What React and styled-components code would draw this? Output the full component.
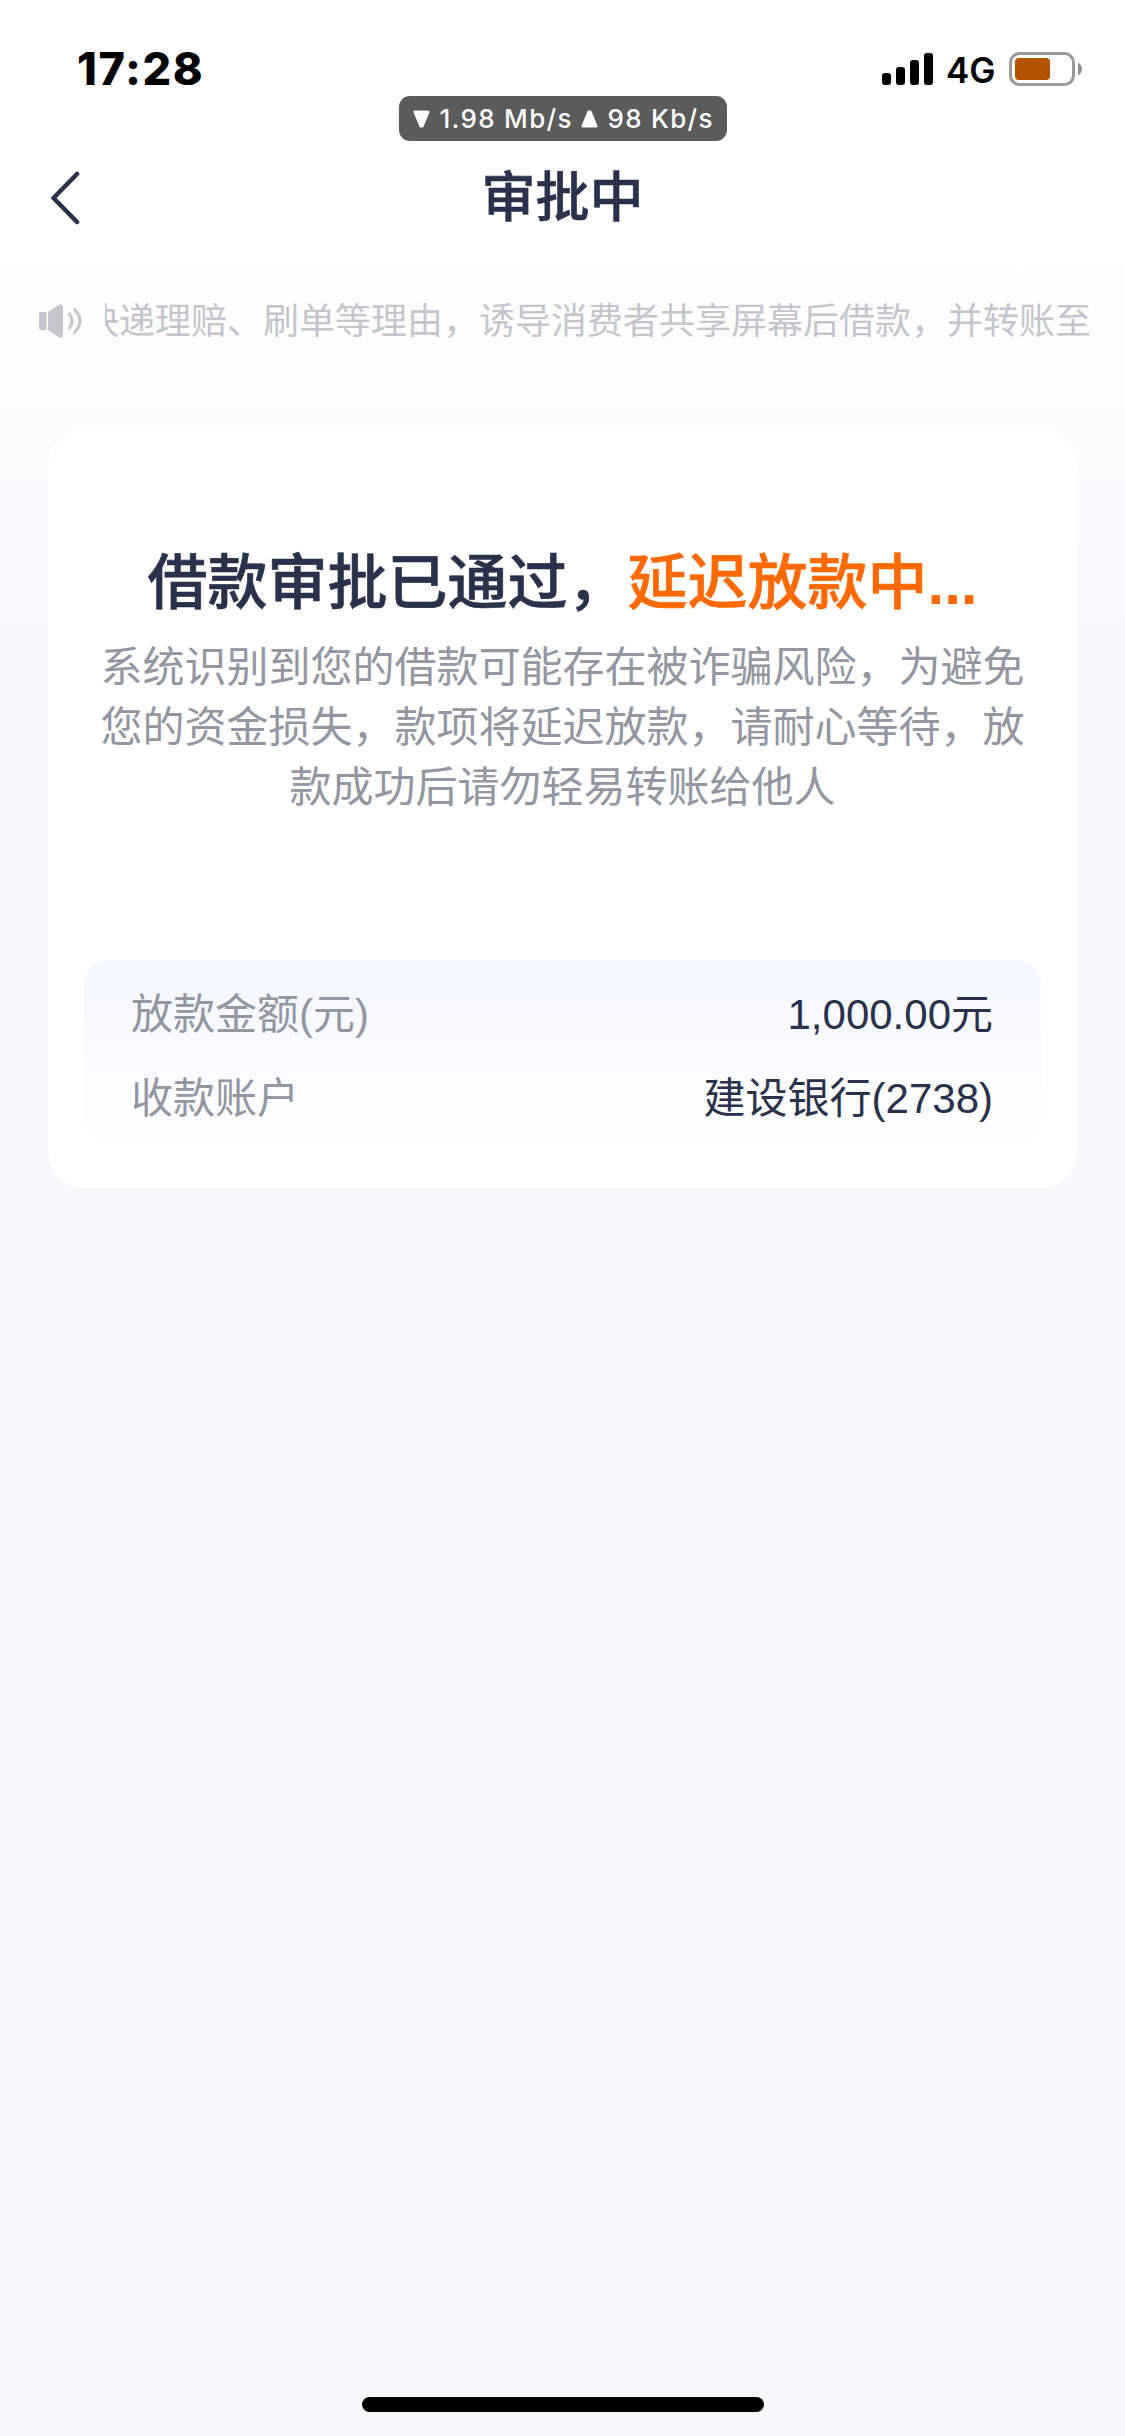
import React from 'react';
import styled, { createGlobalStyle } from 'styled-components';

const GlobalStyle = createGlobalStyle`
  * {
    box-sizing: border-box;
  }
  body {
    margin: 0;
    background: #f6f7f9;
  }
  h1, h2, p {
    margin: 0;
  }
`;

const Screen = styled.div`
  display: flex;
  flex-direction: column;
  width: 1125px;
  height: 2436px;
  overflow: hidden;
  color: #2a324b;
  background: linear-gradient(#fff 260px, #f6f7f9 640px);
  font-family: 'Liberation Sans', 'Noto Sans CJK SC', sans-serif;
`;

const StatusBar = styled.div`
  display: flex;
  align-items: center;
  justify-content: space-between;
  height: 96px;
  padding: 42px 42px 0 77px;
  color: #000;
  font-family: Inter, sans-serif;
`;

const Time = styled.span`
  font-size: 45px;
  font-weight: 800;
  letter-spacing: 1.6px;
  line-height: 54px;
`;

const StatusRight = styled.div`
  display: flex;
  align-items: center;
  height: 54px;
`;

const Network = styled.span`
  width: 49px;
  margin: 2px 14px 0 13px;
  font-size: 35px;
  font-weight: 600;
  line-height: 54px;
  white-space: nowrap;
`;

const SpeedPill = styled.div`
  display: flex;
  align-items: center;
  align-self: center;
  width: 328px;
  height: 45px;
  padding-left: 14px;
  border-radius: 11px;
  background: #5b5b5b;
  color: #fff;
  font-family: Inter, sans-serif;
  font-size: 26px;
  font-weight: 500;
  letter-spacing: 1.3px;
  white-space: nowrap;
`;

const SpeedItem = styled.span`
  display: flex;
  align-items: center;
  gap: 10px;
  width: ${({ $width }) => $width}px;
`;

const NavBar = styled.header`
  display: grid;
  grid-template-columns: 1fr auto 1fr;
  align-items: center;
  height: 114px;
  padding: 0 50px;
`;

const Title = styled.h1`
  font-size: 54px;
  font-weight: 500;
  line-height: 80px;
  -webkit-text-stroke: 0.6px currentColor;
`;

const Notice = styled.div`
  display: flex;
  align-items: center;
  height: 60px;
  margin-top: 36px;
  padding: 0 34px 0 38px;
  color: #c4c6ce;
`;

const NoticeWindow = styled.div`
  flex: 1;
  margin-left: 23px;
  overflow: hidden;
`;

const NoticeText = styled.p`
  margin-left: -22px;
  padding-top: 2px;
  font-size: 36px;
  line-height: 54px;
  white-space: nowrap;
`;

const Card = styled.section`
  height: 759px;
  margin: 78px 48px 0;
  padding: 110px 36px 0;
  border-radius: 36px;
  background: #fff;
`;

const Heading = styled.h2`
  font-size: 60px;
  font-weight: 500;
  line-height: 90px;
  text-align: center;
  white-space: nowrap;
  -webkit-text-stroke: 0.6px currentColor;
`;

const Highlight = styled.span`
  color: #ff6a00;
`;

const Dots = styled.span`
  font-weight: 700;
  -webkit-text-stroke: 0;
`;

const Description = styled.p`
  margin-top: 9px;
  color: #9297a2;
  font-size: 42px;
  line-height: 60px;
  text-align: center;
  white-space: nowrap;
`;

const InfoBox = styled.div`
  height: 186px;
  margin-top: 142px;
  padding: 13px 48px 0 47px;
  border-radius: 24px;
  background: linear-gradient(#f2f7ff, #fff);
`;

const InfoRow = styled.div`
  display: flex;
  justify-content: space-between;
  height: 84px;
  font-size: 42px;
  line-height: 84px;
`;

const InfoLabel = styled.span`
  color: #9297a2;
`;

const HomeIndicator = styled.div`
  align-self: center;
  width: 402px;
  height: 15px;
  margin: auto 0 24px;
  border-radius: 8px;
  background: #000;
`;

const SignalIcon = () => (
  <svg width="51" height="34" viewBox="0 0 51 34">
    <rect x="0" y="21" width="9" height="12" rx="3" />
    <rect x="14" y="15" width="9" height="18" rx="3" />
    <rect x="28" y="8" width="9" height="25" rx="3" />
    <rect x="42" y="1" width="9" height="32" rx="3" />
  </svg>
);

const BatteryIcon = () => (
  <svg width="74" height="34" viewBox="0 0 74 34">
    <rect x="1.5" y="1.5" width="63" height="31" rx="9" fill="none" stroke="#9b9b9b" strokeWidth="3" />
    <rect x="6" y="6" width="35" height="22" rx="4" fill="#b35300" />
    <path d="M69 10.7c2.4 1 4 3.400 4 6.300s-1.600 5.300-4 6.300z" fill="#8e8e8e" />
  </svg>
);

const Triangle = ({ up }) => (
  <svg width="17" height="18" viewBox="0 0 17 18">
    <path
      d="M2 2h13L9.200 16H7.800z"
      fill="#fff"
      stroke="#fff"
      strokeWidth="3"
      strokeLinejoin="round"
      transform={up ? 'rotate(180 8.500 9)' : undefined}
    />
  </svg>
);

const BackIcon = () => (
  <svg width="30" height="54" viewBox="0 0 30 54">
    <path
      d="M27 3L3.500 27L27 51"
      fill="none"
      stroke="#2a324b"
      strokeWidth="4.600"
      strokeLinecap="round"
      strokeLinejoin="round"
    />
  </svg>
);

const SpeakerIcon = () => (
  <svg width="44" height="34" viewBox="0 0 44 34">
    <path d="M3 8h5.500v18H3a2 2 0 0 1-2-2V10a2 2 0 0 1 2-2z" fill="#c4c6ce" />
    <path d="M10 8L21.500 .6Q25 -.6 25 3V31Q25 34.600 21.500 33.400L10 26z" fill="#c4c6ce" />
    <path
      d="M31.500 10Q36.500 17 31.500 24M36.500 5.500Q47.500 17 36.500 28.500"
      fill="none"
      stroke="#c4c6ce"
      strokeWidth="3"
      strokeLinecap="round"
    />
  </svg>
);

const rows = [
  { label: '放款金额(元)', value: '1,000.00元' },
  { label: '收款账户', value: '建设银行(2738)' },
];

const App = () => {
  return (
    <>
      <GlobalStyle />
      <Screen lang="zh-CN">
        <StatusBar>
          <Time>17:28</Time>
          <StatusRight>
            <SignalIcon />
            <Network>4G</Network>
            <BatteryIcon />
          </StatusRight>
        </StatusBar>
        <SpeedPill>
          <SpeedItem $width={168}>
            <Triangle />
            1.98 Mb/s
          </SpeedItem>
          <SpeedItem $width={134}>
            <Triangle up />
            98 Kb/s
          </SpeedItem>
        </SpeedPill>
        <NavBar>
          <BackIcon />
          <Title>审批中</Title>
        </NavBar>
        <Notice>
          <SpeakerIcon />
          <NoticeWindow>
            <NoticeText>快递理赔、刷单等理由，诱导消费者共享屏幕后借款，并转账至</NoticeText>
          </NoticeWindow>
        </Notice>
        <Card>
          <Heading>
            借款审批已通过，
            <Highlight>
              延迟放款中<Dots>...</Dots>
            </Highlight>
          </Heading>
          <Description>
            系统识别到您的借款可能存在被诈骗风险，为避免
            <br />
            您的资金损失，款项将延迟放款，请耐心等待，放
            <br />
            款成功后请勿轻易转账给他人
          </Description>
          <InfoBox>
            {rows.map(({ label, value }) => (
              <InfoRow key={label}>
                <InfoLabel>{label}</InfoLabel>
                <span>{value}</span>
              </InfoRow>
            ))}
          </InfoBox>
        </Card>
        <HomeIndicator />
      </Screen>
    </>
  );
};

export default App;
